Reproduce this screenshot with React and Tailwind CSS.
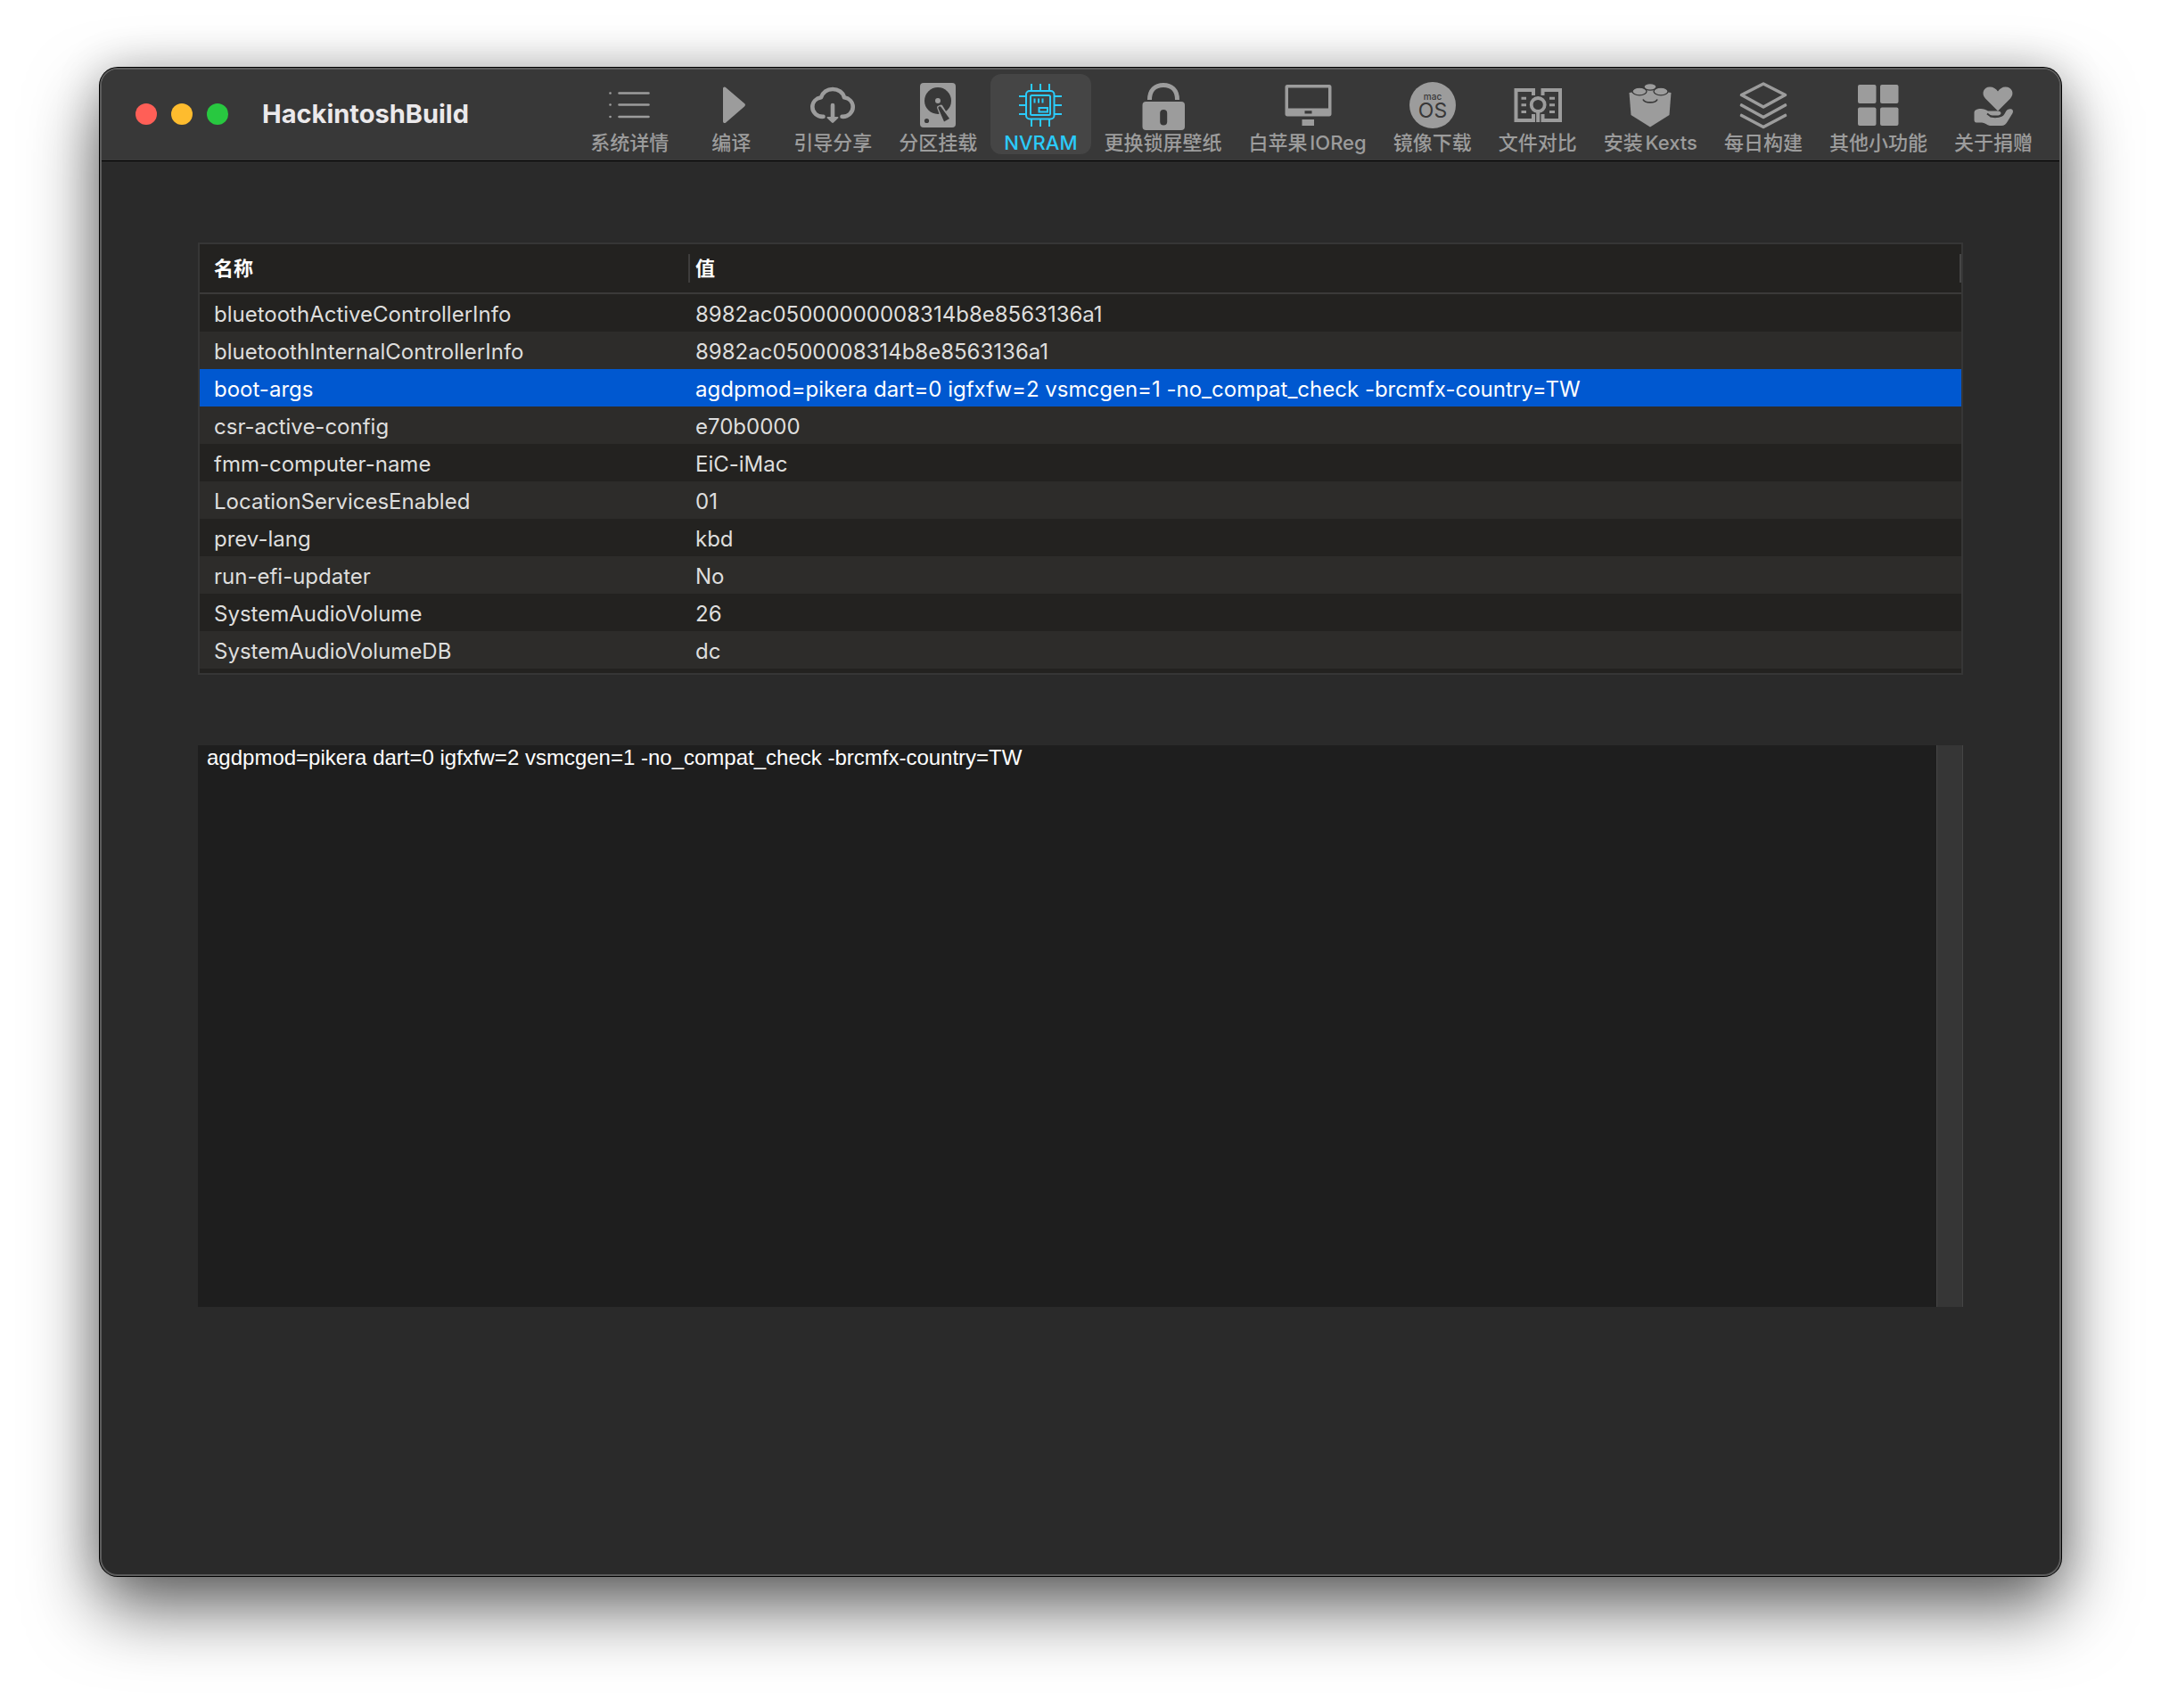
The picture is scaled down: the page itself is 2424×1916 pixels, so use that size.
const icons = {
  list: (
    <g stroke="currentColor" strokeWidth="2.6" strokeLinecap="round">
      <path d="M13.5 14.5H46.5M13.5 27.5H46.5M13.5 41H46.5" />
      <path d="M3.5 14.5h.1M3.5 27.5h.1M3.5 41h.1" />
    </g>
  ),
  play: <path d="M16 9.5c0-1.8 1.7-2.5 3.2-1.3L40 26c1.3 1.1 1.3 2.3 0 3.4L19.2 47.5c-1.5 1.2-3.2.4-3.2-1.3z" fill="currentColor" />,
  cloud: (
    <g>
      <path d="M14.5 40.8C7.5 41.3 2.3 36 2.3 30c0-5.5 4-9.700 9.700-10.700C14 13.5 19 10 25 10s11.5 3.5 13 9.300c5.700 1 9.700 5.200 9.700 10.700 0 6-5.200 11.300-12.200 10.800" fill="none" stroke="currentColor" strokeWidth="4.6" strokeLinecap="round" strokeLinejoin="round" />
      <path d="M25 28V42" stroke="currentColor" strokeWidth="4.6" strokeLinecap="round" />
      <path d="M19.5 41h11c1 0 1.300.8.700 1.500L26 47.5c-.6.600-1.400.600-2 0L18.8 42.5c-.6-.7-.3-1.500.7-1.500z" fill="currentColor" />
    </g>
  ),
  disk: (
    <g>
      <rect x="5" y="3" width="40" height="50" rx="4" fill="currentColor" />
      <circle cx="25" cy="23" r="15" fill="#383838" />
      <path d="M26 30.5L28.5 29.5L37 43.5L32 46.5z" fill="currentColor" stroke="currentColor" strokeWidth="4" strokeLinejoin="round" />
      <circle cx="25" cy="23" r="3" fill="currentColor" />
      <path d="M25.5 31.5a1.700 1.700 0 0 1 3-1.500L38 43L32 46.5z" fill="#383838" />
      <circle cx="12.5" cy="45.5" r="2.6" fill="#383838" />
    </g>
  ),
  chip: (
    <g fill="none" stroke="currentColor" strokeWidth="2">
      <rect x="9" y="12" width="31.5" height="31.5" rx="4" />
      <rect x="14" y="17" width="22" height="22" rx="1.5" />
      <path d="M15 4V12M25 4V12M35 4V12M15 43.5V52M25 43.5V52M35 43.5V52M1 18H9M1 28H9M1 38H9M40.5 18H49M40.5 28H49M40.5 38H49" />
      <path d="M18.5 20.5V25.5M23 20.5V25.5M27.5 20.5V25.5" />
      <rect x="23.5" y="31" width="9.5" height="4.5" />
    </g>
  ),
  lock: (
    <g>
      <path d="M9.5 22C9.5 11 16 5.5 25 5.5S40.5 11 40.5 22" fill="none" stroke="currentColor" strokeWidth="5" />
      <rect x="1.5" y="24" width="47.5" height="32" rx="4" fill="currentColor" />
      <rect x="21.2" y="33" width="8" height="17.5" rx="4" fill="#383838" />
    </g>
  ),
  imac: (
    <g fill="currentColor">
      <path fillRule="evenodd" d="M2 5h47c1.5 0 2.5 1 2.5 2.5V38c0 1.5-1 2.5-2.5 2.5H2C.5 40.5-.5 39.5-.5 38V7.5C-.5 6 .5 5 2 5zM3 8.5V31.500H48V8.500zM21.500 34.200v3.300h8v-3.300z" />
      <rect x="18.5" y="44" width="13.5" height="7" />
    </g>
  ),
  macos: (
    <g>
      <circle cx="25" cy="28" r="26" fill="currentColor" />
      <text x="25" y="21.5" textAnchor="middle" fontSize="10" fontWeight="500" fill="#383838">mac</text>
      <text x="25" y="42" textAnchor="middle" fontSize="23" fontWeight="400" fill="#383838">OS</text>
    </g>
  ),
  compare: (
    <g fill="none" stroke="currentColor">
      <path d="M20 17V11H.5V45H20V38" strokeWidth="4" />
      <path d="M30.5 17V11H50V45H30.5V38" strokeWidth="4" />
      <path d="M6.5 20.300H12M6.5 27.800H12M6.5 35.500H12M38 20.300H44M38 27.800H44M38 35.500H44" strokeWidth="3" />
      <circle cx="25.2" cy="27.5" r="7.5" strokeWidth="3.8" />
      <path d="M25.2 35V47" strokeWidth="4" />
    </g>
  ),
  brick: (
    <g>
      <path d="M1.5 14L5 13.500H45L48.500 14L46.500 39L25 52.500L3.500 39z" fill="currentColor" />
      <path d="M18 10L32 10L40 16H10z" fill="currentColor" />
      <g fill="currentColor" stroke="#383838" strokeWidth="1.3">
        <ellipse cx="25" cy="7.3" rx="7" ry="3.8" />
        <ellipse cx="13" cy="12.5" rx="8" ry="4.3" />
        <ellipse cx="37" cy="12.5" rx="8" ry="4.3" />
      </g>
      <path d="M17 21.500C19 26 31 26 33 21.500" fill="none" stroke="#383838" strokeWidth="1.7" />
    </g>
  ),
  layers: (
    <g fill="none" stroke="currentColor" strokeWidth="3.6" strokeLinecap="round" strokeLinejoin="round">
      <path d="M25 4L49.5 16.500L25 30L.5 16.500z" />
      <path d="M.5 28L25 41.500L49.500 28" />
      <path d="M.5 39.500L25 52.500L49.500 39.500" />
    </g>
  ),
  grid: (
    <g fill="currentColor">
      <rect x="2" y="5" width="20.5" height="21" rx="2" />
      <rect x="27" y="5" width="20.5" height="21" rx="2" />
      <rect x="2" y="30.5" width="20.5" height="20.5" rx="2" />
      <rect x="27" y="30.5" width="20.5" height="20.5" rx="2" />
    </g>
  ),
  donate: (
    <g fill="currentColor">
      <path d="M30 34.500L16 20.500C11 15 14 7.500 21 7.500c4 0 7 2 9 5 2-3 5-5 8.500-5 7.500 0 10.500 7.500 5.500 13z" />
      <path d="M5 33.500C10 31 15 32 19 34.500H30C34.500 35 34.500 38.500 31 39.500H22C20.500 39.500 20.500 41.500 22 41.500H32C35.500 41 37 39 38.500 36C40 32.500 43 32 45.500 32.500C47 33 47.500 35 46.500 37L41 46C39.500 49 37 51 34 51H21C18 50.500 15 47.500 12 47.500H6C4 47.500 3.500 46 3.500 44.500V36.500C3.500 35 4 34 5 33.500z" />
      <path d="M18 37.500C22 41.500 28 42.500 33.500 39.500" fill="none" stroke="#383838" strokeWidth="1.8" />
    </g>
  ),
};

const tools = [
  ["list", "系统详情"],
  ["play", "编译"],
  ["cloud", "引导分享"],
  ["disk", "分区挂载"],
  ["chip", "NVRAM"],
  ["lock", "更换锁屏壁纸"],
  ["imac", "白苹果IOReg"],
  ["macos", "镜像下载"],
  ["compare", "文件对比"],
  ["brick", "安装Kexts"],
  ["layers", "每日构建"],
  ["grid", "其他小功能"],
  ["donate", "关于捐赠"],
];

const rows = [
  ["bluetoothActiveControllerInfo", "8982ac05000000008314b8e8563136a1"],
  ["bluetoothInternalControllerInfo", "8982ac0500008314b8e8563136a1"],
  ["boot-args", "agdpmod=pikera dart=0 igfxfw=2 vsmcgen=1 -no_compat_check -brcmfx-country=TW"],
  ["csr-active-config", "e70b0000"],
  ["fmm-computer-name", "EiC-iMac"],
  ["LocationServicesEnabled", "01"],
  ["prev-lang", "kbd"],
  ["run-efi-updater", "No"],
  ["SystemAudioVolume", "26"],
  ["SystemAudioVolumeDB", "dc"],
];

const selected = "boot-args";

function Tool({ icon, label }) {
  const active = label === "NVRAM";
  return (
    <button
      type="button"
      aria-pressed={active}
      className={
        "flex h-[90px] min-w-[110px] flex-col items-center rounded-xl px-[15px] text-[22px] leading-7 font-medium whitespace-nowrap [text-autospace:normal] " +
        (active ? "bg-[#454545] text-[#2bcbfb]" : "text-[#9c9c9c]")
      }
    >
      <svg className="mt-[7px] h-14 w-[50px] overflow-visible" viewBox="0 0 50 56" aria-hidden="true">
        {icons[icon]}
      </svg>
      <span>{label}</span>
    </button>
  );
}

export default function App() {
  return (
    <div className="min-h-screen bg-white px-28 pt-19 pb-37 font-['Inter','Noto_Sans_CJK_SC',sans-serif]">
      <main className="flex min-h-[1692px] flex-col overflow-hidden rounded-[20px] border-2 border-[#5c5c5c] bg-[#2a2a2a] shadow-[0_0_0_1px_#000,0_36px_80px_rgba(0,0,0,0.6),0_0_50px_rgba(0,0,0,0.2)]">
        <header className="flex h-[103px] items-start justify-between border-b border-black bg-[#383838] pr-[15px] pl-[38px]">
          <div className="flex h-[100px] items-center">
            <div className="flex gap-4">
              <button type="button" aria-label="Close" className="size-6 rounded-full bg-[#ff5f57]" />
              <button type="button" aria-label="Minimize" className="size-6 rounded-full bg-[#febc2e]" />
              <button type="button" aria-label="Zoom" className="size-6 rounded-full bg-[#28c840]" />
            </div>
            <h1 className="ml-[38px] text-[29px] font-bold text-[#ebe9eb]">HackintoshBuild</h1>
          </div>
          <nav className="flex pt-[5px]">
            {tools.map(([icon, label]) => (
              <Tool key={label} icon={icon} label={label} />
            ))}
          </nav>
        </header>

        <div className="flex flex-col px-[108px] pt-[91px]">
          <div className="border-2 border-[#363636] bg-[#232220] pb-[5px]">
            <table className="w-full table-fixed border-separate border-spacing-0 text-left text-2xl leading-none text-[#dededd]">
              <colgroup>
                <col className="w-[550px]" />
                <col />
              </colgroup>
              <thead>
                <tr className="h-14 text-[22px] text-white">
                  <th scope="col" className="border-b-2 border-[#3b3a39] p-0 font-bold">
                    <div className="flex h-8 items-center border-r-2 border-[#3e3d3c] pl-4">名称</div>
                  </th>
                  <th scope="col" className="border-b-2 border-[#3b3a39] p-0 font-bold">
                    <div className="flex h-8 items-center border-r-2 border-[#464646] pl-1.5">值</div>
                  </th>
                </tr>
              </thead>
              <tbody>
                {rows.map(([name, value]) => (
                  <tr
                    key={name}
                    aria-selected={name === selected}
                    className={
                      name === selected
                        ? "h-[42px] bg-[#0058d0] text-white"
                        : "h-[42px] even:bg-[#2d2c2a]"
                    }
                  >
                    <td className="p-0 pt-1 pl-4">{name}</td>
                    <td className="p-0 pt-1 pl-1.5">{value}</td>
                  </tr>
                ))}
              </tbody>
            </table>
          </div>

          <div className="mt-[79px] flex h-[630px]">
            <textarea
              aria-label="值"
              spellCheck={false}
              className="min-w-0 grow resize-none bg-[#1e1e1e] px-2.5 py-0 font-['Liberation_Sans',sans-serif] text-2xl leading-7 text-white outline-none"
              defaultValue="agdpmod=pikera dart=0 igfxfw=2 vsmcgen=1 -no_compat_check -brcmfx-country=TW"
            />
            <div className="w-[30px] border-r border-l border-[#454545] bg-[#363636]" />
          </div>
        </div>
      </main>
    </div>
  );
}
